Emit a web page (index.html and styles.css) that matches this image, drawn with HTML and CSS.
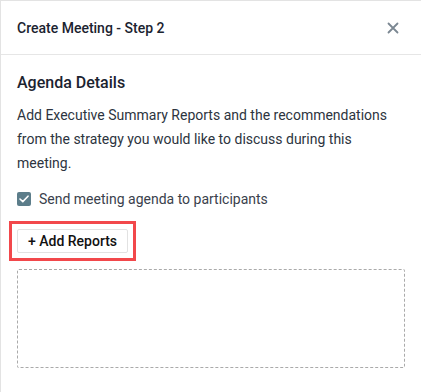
FILE: index.html
```html
<!DOCTYPE html>
<html lang="en">
<head>
  <meta charset="UTF-8" />
  <meta name="viewport" content="width=device-width, initial-scale=1.0" />
  <title>Create Meeting</title>
  <link rel="stylesheet" href="styles.css">
</head>
<body>
  <div class="modal">
    <div class="modal-header">
      <span class="modal-title">Create Meeting - Step 2</span>
      <button class="close-btn" aria-label="Close">
        <svg width="12" height="12" viewBox="0 0 12 12">
          <path d="M1.5 1.5 L10.5 10.5 M10.5 1.5 L1.5 10.5" stroke="#7b8792" stroke-width="1.8" stroke-linecap="round" />
        </svg>
      </button>
    </div>
    <div class="modal-body">
      <h2>Agenda Details</h2>
      <p class="intro-text">Add Executive Summary Reports and the recommendations from the strategy you would like to discuss during this meeting.</p>
      <label class="check-row">
        <span class="checkbox">
          <svg width="10" height="8" viewBox="0 0 10 8">
            <path d="M1 4 L3.8 6.6 L9 1.2" fill="none" stroke="#fff" stroke-width="1.6" stroke-linecap="round" stroke-linejoin="round" />
          </svg>
        </span>
        Send meeting agenda to participants
      </label>
      <div class="highlight">
        <button class="add-btn">+ Add Reports</button>
      </div>
      <div class="drop-zone"></div>
    </div>
  </div>
</body>
</html>
```

FILE: styles.css
```css
* {
  box-sizing: border-box;
}
body {
  margin: 0;
  font-family: Roboto, "Liberation Sans", sans-serif;
  background: #fff;
  color: #2b2f36;
}
.modal {
  width: 421px;
  height: 392px;
  border-top: 1px solid #e3e3e3;
  border-left: 1px solid #e3e3e3;
  background: #fff;
}
.modal-header {
  height: 54px;
  display: flex;
  align-items: center;
  justify-content: space-between;
  padding: 0 16px 0 16px;
  border-bottom: 1px solid #e6e6e6;
}
.modal-title {
  font-size: 14px;
  font-weight: 500;
  color: #1b2330;
}
.close-btn {
  background: none;
  border: none;
  padding: 0;
  margin-right: 6px;
  width: 12px;
  height: 12px;
  display: flex;
  cursor: pointer;
}
.modal-body {
  padding: 16px 16px 0 16px;
}
h2 {
  margin: 0;
  font-size: 16px;
  font-weight: 500;
  line-height: 24px;
  color: #1b2330;
}
.intro-text {
  margin: 8px 0 0;
  font-size: 14px;
  line-height: 24px;
  color: #2d3440;
}
.check-row {
  display: flex;
  align-items: center;
  gap: 8px;
  margin-top: 16px;
  font-size: 14px;
  color: #3a414c;
}
.checkbox {
  width: 14px;
  height: 14px;
  border-radius: 2px;
  background: #5c7d8a;
  display: flex;
  align-items: center;
  justify-content: center;
}
.highlight {
  display: inline-block;
  margin: 14px 0 0 -8px;
  border: 3px solid #f2484b;
  padding: 5px 5px 5px 5px;
}
.add-btn {
  display: block;
  font-family: Roboto, "Liberation Sans", sans-serif;
  font-size: 14px;
  font-weight: 500;
  color: #111;
  background: #fff;
  border: 1px solid #e2e2e2;
  border-radius: 2px;
  height: 24px;
  padding: 0 10px;
}
.drop-zone {
  margin-top: 8px;
  width: 388px;
  height: 99px;
  border: 1px dashed #aaa;
  border-radius: 2px;
}
```
